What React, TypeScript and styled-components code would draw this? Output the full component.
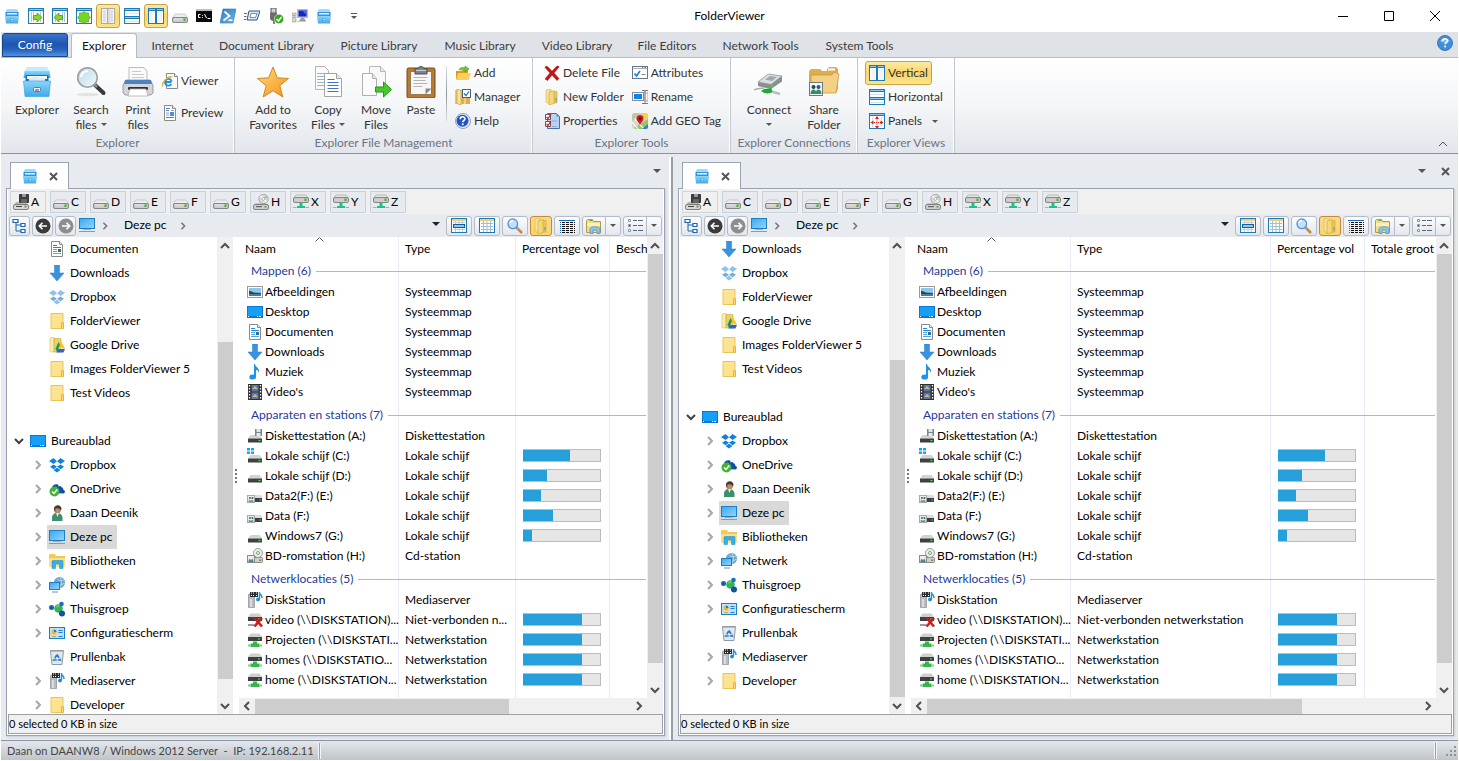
import React from 'react';
import styled, { createGlobalStyle, css } from 'styled-components';

const FONT = "'Lato', 'Liberation Sans', sans-serif";

const GlobalStyle = createGlobalStyle`
  *, *::before, *::after { box-sizing: border-box; }
  body { margin: 0; background: #fff; font-family: ${FONT}; font-size: 12px; line-height: 16px; color: #000; }
  button { font: inherit; color: inherit; background: none; border: 0; padding: 0; margin: 0; white-space: nowrap; }
  ul { list-style: none; margin: 0; padding: 0; }
`;

/* ------------------------------------------------------------------ icons */

const drivePlain = (
  <>
    <path d="M3.500 6h9c1 0 2 1.500 3 4H.5c1-2.500 2-4 3-4z" fill="#ededed" stroke="#b0b0b0" strokeWidth=".6" />
    <rect x=".5" y="9.500" width="15" height="5" rx="1.500" fill="#cdcdcd" stroke="#7c7c7c" strokeWidth=".9" />
    <path d="M2 11h8" stroke="#e9e9e9" />
    <rect x="11.500" y="10.500" width="2" height="2.500" fill="#3fae29" />
  </>
);

const darkBody = (
  <>
    <path d="M3.500 7h9L15 10.500H1z" fill="#d3d3d3" />
    <rect x="1" y="10.500" width="14" height="4" fill="#3d4144" />
    <rect x="11.500" y="12" width="2" height="1" fill="#5be04b" />
  </>
);

const serverBody = (
  <>
    <path d="M3.500 1.500h9L15 5H1z" fill="#cfcfcf" />
    <rect x="1" y="5" width="14" height="4" fill="#3d4144" />
    <rect x="11" y="6.500" width="2" height="1" fill="#5be04b" />
  </>
);

const twoPanes = (
  <>
    <rect x=".5" y=".5" width="15" height="15" fill="#fff" stroke="#1a7bb5" />
    <rect x="0" y="0" width="16" height="3" fill="#1a7bb5" />
    <rect x="1" y="1" width="14" height="1" fill="#8ecaf0" />
  </>
);

const sheet = (
  <>
    <path d="M2.500.5h8l3 3v12h-11z" fill="#fff" stroke="#8a8a8a" />
    <path d="M10.500.5v3h3" fill="#eee" stroke="#8a8a8a" />
  </>
);

const monitor = (
  <>
    <rect x="0" y="1" width="16" height="11" fill="#1c7fc4" />
    <rect x="1" y="2" width="14" height="9" fill="url(#screen)" />
    <rect x="4" y="12" width="8" height="1" fill="#8fb6d4" />
    <rect x="0" y="14" width="16" height="1" fill="#7f9db5" />
  </>
);

const cabinet = (
  <>
    <path d="M3 1h10l1.500 3H1.500z" fill="#9bdcfb" />
    <rect x="1.500" y="4" width="13" height="4" fill="#2f93dd" />
    <rect x="3" y="5" width="10" height="1.500" fill="#e9f6ff" />
    <path d="M1 8h14l-1 7.500H2z" fill="url(#cab)" />
    <rect x="6.500" y="11" width="3" height="1.500" fill="#f5f5f5" stroke="#3b7eb4" strokeWidth=".5" />
  </>
);

const dropboxShape = (a: string, b: string) => (
  <>
    <path d="M4.500 1L0 4l4.500 3L8 4.200zM11.500 1L16 4l-4.500 3L8 4.200z" fill={a} />
    <path d="M4.500 7.500L1 9.800l3.500 2.400L8 9.800zM11.500 7.500L15 9.800l-3.500 2.400L8 9.800z" fill={b} />
    <path d="M4.500 13L8 10.800l3.500 2.200L8 15.500z" fill={a} />
  </>
);

const iconArt: Record<string, React.ReactNode> = {
  cabinet,
  paneRight: (
    <>
      {twoPanes}
      <path d="M3.500 4v10M5.500 4v10M12.500 4v10" stroke="#a4cbe4" />
      <path d="M5.500 7.500H9V5l5 4.500L9 14v-2.500H5.500z" fill="#86d62c" stroke="#4d9416" strokeWidth=".8" />
    </>
  ),
  paneLeft: (
    <>
      {twoPanes}
      <path d="M3.500 4v10M10.500 4v10M12.500 4v10" stroke="#a4cbe4" />
      <path d="M10.500 7.500H7V5L2 9.500 7 14v-2.500h3.500z" fill="#86d62c" stroke="#4d9416" strokeWidth=".8" />
    </>
  ),
  paneStar: (
    <>
      {twoPanes}
      <path d="M8 3.500L10 5h2.500v2.500l2 2-2 2V14H10l-2 1.500L6 14H3.500v-2.500l-2-2 2-2V5H6z" fill="#76d624" stroke="#4ba01a" strokeWidth=".7" />
    </>
  ),
  paneGray: (
    <>
      <rect x="1" y="0" width="14" height="16" fill="#f6f6f6" />
      <path d="M1.500 0v16M7.500 0v16M14.500 0v16M1 .5h14M1 15.500h14" stroke="#a9a9a9" />
      <rect x="3" y="2" width="3" height="12" fill="#e0e0e0" />
      <rect x="10" y="2" width="3" height="12" fill="#e0e0e0" />
      <path d="M9 1v14" stroke="#c4c4c4" />
    </>
  ),
  paneH: (
    <>
      <rect x=".5" y=".5" width="15" height="15" fill="#fff" stroke="#1a7bb5" />
      <rect x="0" y="0" width="16" height="3" fill="#1a7bb5" />
      <rect x="0" y="8" width="16" height="3" fill="#1a7bb5" />
      <path d="M1 5.500h14M1 13.500h14" stroke="#d4e5f0" />
      <path d="M1 1.500h14M1 9.500h14" stroke="#8ecaf0" />
    </>
  ),
  paneV: (
    <>
      <rect x=".5" y=".5" width="7" height="15" fill="#fff" stroke="#1a7bb5" />
      <rect x="8.500" y=".5" width="7" height="15" fill="#fff" stroke="#1a7bb5" />
      <path d="M1 1.500h6M9 1.500h6" stroke="#8ecaf0" />
      <path d="M1 2.500h6M9 2.500h6" stroke="#1a7bb5" />
      <path d="M3 4v10M5 4v10M11 4v10M13 4v10" stroke="#dfeaf2" />
    </>
  ),
  drive: drivePlain,
  cmd: (
    <>
      <rect x="0" y="1" width="16" height="13" fill="#0a0a0a" />
      <rect x="0" y="1" width="16" height="2" fill="#bdbdbd" />
      <path d="M4.500 6.500H2.500v3h2M6.500 7v.8M6.500 9v.8M8.500 6l2 4M11.500 10.500h3" stroke="#fff" fill="none" />
    </>
  ),
  powershell: (
    <>
      <path d="M3 1h13l-3 14H0z" fill="url(#ps)" stroke="#2f6fa8" strokeWidth=".6" />
      <path d="M4.500 3.500L9.500 8l-6 4.500" stroke="#fff" strokeWidth="1.700" fill="none" />
      <path d="M8.500 12.200h4" stroke="#fff" strokeWidth="1.500" />
    </>
  ),
  run: (
    <>
      <path d="M5 3h11l-3 9H3z" fill="#dcebfa" stroke="#31507c" />
      <path d="M7 5.500h6l-1.500 4H6z" fill="#fff" stroke="#4a78b5" strokeWidth=".8" />
      <path d="M0 5.500h3M0 8.500h2.500M0 11.500h2" stroke="#666" />
    </>
  ),
  usb: (
    <>
      <path d="M3 0h5v5H3z" fill="#cfcfcf" stroke="#555" />
      <path d="M2 5h7v5c0 2-1.500 3-3.500 3S2 12 2 10z" fill="#6d6d6d" />
      <path d="M6 13v3" stroke="#555" strokeWidth="1.500" />
      <circle cx="11" cy="11" r="4.700" fill="#36a818" stroke="#fff" strokeWidth=".5" />
      <path d="M8.500 11l2 2 3-4" stroke="#fff" strokeWidth="1.500" fill="none" />
    </>
  ),
  netpc: (
    <>
      <rect x="5" y="1" width="11" height="9" fill="#b9bcc2" />
      <rect x="6.500" y="2.500" width="8" height="6" fill="#1626c9" />
      <path d="M10 2.500h4.500V7z" fill="#4d6bea" />
      <path d="M9 10h3l2 3H7z" fill="#9a9da3" />
      <rect x="0" y="5" width="4" height="9" fill="#d4d4d4" stroke="#999" strokeWidth=".6" />
      <path d="M1 7.500h2M1 9.500h2" stroke="#888" strokeWidth=".7" />
      <path d="M5 13.500h9" stroke="#c9c9c9" />
    </>
  ),
  ie: (
    <>
      <path d="M4.500.5h8l3 3v12h-11z" fill="#fafafa" stroke="#8a8a8a" />
      <path d="M12.500.5v3h3" fill="#eee" stroke="#8a8a8a" />
      <path d="M9.500 9H3.200M9.300 11a3.400 3.400 0 1 1 .4-2.500" stroke="#2494dd" strokeWidth="1.900" fill="none" />
      <path d="M.7 13.500C-.8 10 5.500 2.500 10.500 4" stroke="#e8b21a" strokeWidth="1.300" fill="none" />
    </>
  ),
  preview: (
    <>
      {sheet}
      <path d="M4 3.500h4M4 5.500h3M4 12.500h8" stroke="#5b7fb8" />
      <path d="M9 5.500h3M4 8h3M4 10h3" stroke="#8aa2c4" />
      <rect x="8" y="7" width="4" height="4" fill="#4c8fd6" />
    </>
  ),
  doc: (
    <>
      {sheet}
      <path d="M4 4.500h4M4 6.500h8" stroke="#1f8ad6" />
      <path d="M4 8.500h4M4 10.500h4M4 12.500h8" stroke="#5aa7dd" />
      <rect x="9" y="8" width="3" height="3" fill="#2d6d8d" />
    </>
  ),
  addFolder: (
    <>
      <path d="M1 6h5l1-1h6v9H1z" fill="#d99a1c" />
      <path d="M3 8h13l-2.500 7H1z" fill="#fbcf5b" />
      <path d="M4 5c1-3 4-3 6-2V1l4 3-4 3V5C8 4 6 4 4 5z" fill="#5fd02a" stroke="#2f8d12" strokeWidth=".5" />
    </>
  ),
  manager: (
    <>
      <path d="M0 1h7v14H0z" fill="#e9c86a" />
      <path d="M2 0l4 1.500V16l-4-1.500z" fill="#f9e39f" stroke="#b58d2c" strokeWidth=".6" />
      <path d="M7 9h8v6H7z" fill="#d9b04b" />
      <path d="M10 9v6" stroke="#f3dc95" strokeWidth="1.500" />
      <rect x="7.500" y=".5" width="8" height="8" fill="#fff" stroke="#4a5e78" />
      <path d="M9 4.500l2 2 3-4" stroke="#2368c4" strokeWidth="1.200" fill="none" />
    </>
  ),
  help: (
    <>
      <circle cx="8" cy="8" r="7.500" fill="#e6ecf5" stroke="#7d8ca6" strokeWidth=".8" />
      <circle cx="7.500" cy="7.800" r="6" fill="#1d55c4" />
      <path d="M5.200 6.200c0-3.200 4.800-3 4.800-.4 0 1.700-2.300 1.700-2.300 3.400" stroke="#fff" strokeWidth="1.600" fill="none" />
      <circle cx="7.700" cy="11.300" r="1" fill="#fff" />
    </>
  ),
  helpLight: (
    <>
      <circle cx="8" cy="8" r="7.500" fill="#3f8fd8" stroke="#2a68ac" strokeWidth=".8" />
      <path d="M3 6a5.500 4 0 0 1 10 0c-3 2-7 2-10 0z" fill="#7dbcf0" />
      <path d="M5.500 6.200c0-3.200 5-3 5-.4 0 1.700-2.400 1.700-2.400 3.400" stroke="#fff" strokeWidth="1.600" fill="none" />
      <circle cx="8.100" cy="11.500" r="1" fill="#fff" />
    </>
  ),
  delete: (
    <path d="M1 2.500C1.500 1 3 1 4 2l4 4.200L12.500 1.500c1-1 2.500-.5 2.500.5L10 8l5 5.500-2 2L8 10l-4.500 5.500L1 14l5-6z" fill="#c81410" stroke="#8f0d0a" strokeWidth=".5" />
  ),
  folderOpen: (
    <>
      <path d="M2 1l5-1v15l-5-1.500z" fill="#f8e39a" stroke="#d6b44c" strokeWidth=".6" />
      <path d="M7 2.500h6V14H7z" fill="#e8c85c" stroke="#caa53c" strokeWidth=".6" />
      <path d="M5 3l5-1.500V14.500L5 16z" fill="#f4d87a" stroke="#c9a43c" strokeWidth=".6" />
      <rect x="11.500" y="9" width="1" height="3.500" fill="#4b98d6" />
    </>
  ),
  properties: (
    <>
      <path d="M3.500.5h9l3 3v12h-12z" fill="#b8d3f3" stroke="#4a6ea5" />
      <path d="M12.500.5v3h3" fill="#5b86c4" />
      <path d="M8 8h5M8 13.500h5" stroke="#8aabd8" />
      <path d="M1.500 1.500h5v5h-5zM1.500 8.500h5v5h-5z" fill="#fff" stroke="#5b5b5b" />
      <path d="M2.500 4l1.500 1.500L7 1M2.500 11l1.500 1.500L7 8" stroke="#d01a1a" strokeWidth="1.200" fill="none" />
    </>
  ),
  attributes: (
    <>
      <rect x=".5" y="1.500" width="15" height="12" fill="#fff" stroke="#6a7684" />
      <path d="M1 3.500h14" stroke="#aab3bd" />
      <path d="M10 2.500h1M12.500 2.500h1.500" stroke="#5c6773" />
      <path d="M2.500 8.500l2 2.500 3.500-5" stroke="#1c87d4" strokeWidth="1.700" fill="none" />
      <path d="M9.500 9.500h4" stroke="#7c8794" />
    </>
  ),
  rename: (
    <>
      <rect x=".5" y="3.500" width="11" height="8" fill="#fff" stroke="#8a8a8a" />
      <rect x="2" y="5" width="8" height="5" fill="#0a84ee" />
      <path d="M10 1.500h2c1 0 1 1 1 1s0-1 1-1h2M13 2v11M10 14.500h2c1 0 1-1 1-1s0 1 1 1h2" stroke="#777" strokeWidth="1.200" fill="none" />
      <path d="M14 4h2v8h-2" fill="#fff" stroke="#8a8a8a" strokeWidth=".8" />
    </>
  ),
  geo: (
    <>
      <rect x="0" y="0" width="16" height="16" rx="3" fill="#d8d5cb" />
      <path d="M8 0h5c2 0 3 1 3 3v6z" fill="#f5d043" />
      <path d="M0 3c0-2 1-3 3-3h5L0 8z" fill="#b9c9a4" />
      <path d="M2 15L16 6v7c0 2-1 3-3 3H4z" fill="#8fc76a" />
      <path d="M10 16l6-5v3c0 1-1 2-2 2z" fill="#3d7de0" />
      <path d="M0 9l6 7M3 6l8 9" stroke="#f7f5ee" strokeWidth="1.200" />
      <path d="M8 12.500C7.500 9.500 4.500 8.500 4.500 5.500a3.500 3.500 0 0 1 7 0c0 3-3 4-3.500 7z" fill="#d01a1a" />
      <circle cx="8" cy="5.500" r="1.300" fill="#5c0909" />
    </>
  ),
  panels: (
    <>
      {twoPanes}
      <path d="M3.500 4v10M12.500 4v10" stroke="#cfe1ee" />
      <path d="M8 4.500v10M3 9.500h10" stroke="#d81c1c" strokeDasharray="1 1" />
      <path d="M8 3l2 3H6zM8 16l2-3H6zM1.500 9.500l3-2v4zM14.500 9.500l-3-2v4z" fill="#d81c1c" />
    </>
  ),
  driveFloppy: (
    <>
      <path d="M3 8h10l2 3v3H1v-3z" fill="#b9b9b9" />
      <rect x=".5" y="10.500" width="15" height="5" rx="1.500" fill="#d8d8d8" stroke="#666" strokeWidth=".8" />
      <path d="M3 12.500h6" stroke="#444" />
      <rect x="11.500" y="11.500" width="2" height="2" fill="#4aa830" />
      <rect x="6" y="0" width="10" height="9" rx="1" fill="#3b3b3b" />
      <rect x="9" y="0" width="4" height="3" fill="#9a9a9a" />
      <rect x="8" y="5" width="6" height="4" fill="#666" />
    </>
  ),
  driveCd: (
    <>
      <path d="M3 9h10l2 2v3H1v-3z" fill="#c6c6c6" />
      <rect x=".5" y="10.500" width="15" height="5" rx="1.500" fill="#cfcfcf" stroke="#6f6f6f" strokeWidth=".8" />
      <path d="M3 12.700h6" stroke="#555" />
      <rect x="11.500" y="12" width="2" height="1.500" fill="#4aa830" />
      <circle cx="10.500" cy="5" r="4.700" fill="#dcdcdc" stroke="#8c8c8c" strokeWidth=".7" />
      <path d="M10.500 5L7.500 2M10.500 5l3 3" stroke="#fff" strokeWidth="1.400" />
      <path d="M10.500 5l3-2.500" stroke="#7bbf5a" strokeWidth="1.200" />
      <circle cx="10.500" cy="5" r="1.400" fill="#fff" stroke="#888" strokeWidth=".6" />
    </>
  ),
  driveNet: (
    <>
      <path d="M3 1h10l2.500 3.500h-15z" fill="#e4e4e4" stroke="#9b9b9b" strokeWidth=".6" />
      <rect x=".5" y="3.500" width="15" height="5" rx="1.500" fill="#cdcdcd" stroke="#7c7c7c" strokeWidth=".9" />
      <rect x="11.500" y="4.500" width="2" height="2.500" fill="#3fae29" />
      <path d="M6.500 9h3v3h2.500v2H4v-2h2.500z" fill="#17c486" />
      <path d="M0 13.500h3.500M12.500 13.500H16" stroke="#a5adab" />
    </>
  ),
  treeView: (
    <>
      <path d="M1 1.500h5v3H1zM9 5.500h4v3H9zM9 11.500h4v3H9z" fill="#fff" stroke="#1b66b0" strokeWidth="1.200" />
      <path d="M4 5v8h5M4 7h5" stroke="#1b66b0" fill="none" />
    </>
  ),
  back: (
    <>
      <circle cx="8" cy="8" r="7.500" fill="#3a3a3a" />
      <path d="M12 8H4.500M7.500 4.800L4.300 8l3.200 3.200" stroke="#fff" strokeWidth="1.600" fill="none" />
    </>
  ),
  forward: (
    <>
      <circle cx="8" cy="8" r="7.500" fill="#8e8e8e" />
      <path d="M4 8h7.500M8.500 4.800L11.700 8l-3.200 3.200" stroke="#fff" strokeWidth="1.600" fill="none" />
    </>
  ),
  pc: monitor,
  tableSel: (
    <>
      <rect x=".5" y=".5" width="15" height="14" fill="#fff" stroke="#1a7bb5" />
      <rect x="1" y="1" width="14" height="2" fill="#f4cd7c" />
      <path d="M2 4.500h12M2 11.500h12M4.500 3v11M8 3v11M11.500 3v11" stroke="#bcd0de" />
      <rect x="2.500" y="6.500" width="11" height="3" fill="#8ec8ee" stroke="#155e96" />
    </>
  ),
  table: (
    <>
      <rect x=".5" y=".5" width="15" height="14" fill="#fff" stroke="#1a7bb5" />
      <rect x="1" y="1" width="14" height="2" fill="#f4cd7c" />
      <path d="M2 5.500h12M2 8.500h12M2 11.500h12M4.500 3v11M8 3v11M11.500 3v11" stroke="#a3bccf" />
    </>
  ),
  magnify: (
    <>
      <path d="M9 9l6 6" stroke="#c98a3a" strokeWidth="2.600" />
      <path d="M8.500 8.500l3 3" stroke="#8aa4c4" strokeWidth="2" />
      <circle cx="5.800" cy="5.800" r="4.800" fill="#bfe0fb" stroke="#5e8fd0" strokeWidth="1.300" />
      <path d="M3 5a3 3 0 0 1 3-2.500" stroke="#fff" strokeWidth="1.300" fill="none" />
    </>
  ),
  details: (
    <>
      <path d="M0 2.500h16" stroke="#1b66b0" />
      <path d="M1.500 4v12" stroke="#1b66b0" strokeDasharray="1 1" />
      <path d="M3 4.500h13M3 6.500h13M3 8.500h13M3 10.500h13M3 12.500h13M3 14.500h13" stroke="#111" strokeDasharray="3 1" />
    </>
  ),
  libs: (
    <>
      <path d="M0 2l1-1h5l1 2h9v11H0z" fill="#f3c858" />
      <path d="M0 5h16v9H0z" fill="#fbe08b" />
      <path d="M3 15.500V8.500c0-1 .5-1 1-1h9c.5 0 1 0 1 1v7h-3.500V11h-4v4.500z" fill="#35b0ea" stroke="#1b87c4" strokeWidth=".5" />
    </>
  ),
  libView: (
    <>
      <path d="M.5 2.500l1-1h5l1 2h7v11H.5z" fill="#f3dd8a" stroke="#b59a48" />
      <path d="M1 5h13v3H1z" fill="#fbf0c0" />
      <path d="M3.500 2.500h3" stroke="#3fae4a" />
      <path d="M4 15.500V11c0-3 10-3 10 0v4.500h-3V12H7v3.500z" fill="#8dc8ee" stroke="#3b8bc4" strokeWidth=".7" />
    </>
  ),
  listView: (
    <>
      <path d="M1.500 1.500h2v2h-2zM1.500 6.500h2v2h-2zM1.500 11.500h2v2h-2z" fill="#fff" stroke="#8b93a8" />
      <rect x="2" y="7" width="1" height="1" fill="#c81a1a" />
      <path d="M6 2.500h4M11 2.500h5M6 7.500h4M11 7.500h5M6 12.500h4M11 12.500h5" stroke="#5a657c" />
    </>
  ),
  download: <path d="M5.500 0h5v8H15l-7 8-7-8h4.500z" fill="#3793e0" stroke="#2479c4" strokeWidth=".5" />,
  dropboxLight: dropboxShape('#8fc1ec', '#74aee0'),
  dropbox: dropboxShape('#1081de', '#1081de'),
  folder: (
    <>
      <path d="M2 .5h12v15H2z" fill="#fde28f" stroke="#e9c65c" />
      <path d="M12.500 9.500h2v6h-2z" fill="#fbd868" stroke="#dfb648" />
    </>
  ),
  gdrive: (
    <>
      <path d="M1 1l4-1v15H1z" fill="#fbeeb5" stroke="#d9bd62" strokeWidth=".6" />
      <path d="M5 1.500h7V15H5z" fill="#ecd06c" stroke="#cba63e" strokeWidth=".6" />
      <path d="M9.500 5h3l3.500 6.500h-3z" fill="#fcc419" />
      <path d="M9.500 5L11 8l-3 7-1.500-3.500z" fill="#1a9a58" />
      <path d="M9 12h7l-1.500 3.500H7.500z" fill="#2c63d6" />
    </>
  ),
  desktop: (
    <>
      <rect x="0" y="2" width="16" height="12" fill="#0a78d1" />
      <rect x="1" y="3" width="14" height="9" fill="#14a0f8" />
      <path d="M1 12.500h1M10 12.500h1M12 12.500h2" stroke="#fff" />
    </>
  ),
  onedrive: (
    <>
      <path d="M4 12c-3 0-4-4-1-5 0-4 6-5 7.500-2 3-.5 4 2 3.500 3.500 2 .5 2.500 3 1 4z" fill="#0f4fa8" />
      <path d="M9 5c2-1 4 0 4.500 2" stroke="#fff" strokeWidth=".8" fill="none" />
      <circle cx="5.500" cy="10.500" r="5" fill="#42b532" />
      <path d="M3 10.500l2 2 3.300-4" stroke="#fff" strokeWidth="1.500" fill="none" />
    </>
  ),
  user: (
    <>
      <path d="M3 16v-3c0-3.500 2-5 5-5s5.500 1.500 5.500 5v3z" fill="#3e8f6d" />
      <path d="M7 8h3l-1.500 4z" fill="#f2f2f2" />
      <circle cx="8.500" cy="4.800" r="3.500" fill="#b98a68" />
      <path d="M5 4c0-5 7.500-5 7.500 0l-.7 1.500C11 3 8 3 6.500 3.500L6 7z" fill="#4c3427" />
    </>
  ),
  network: (
    <>
      <circle cx="10.500" cy="5.500" r="5.500" fill="#6aa7cf" />
      <path d="M8 2c2 2 5 2 7 1M7 7c3 1 6 1 8.500-1M11 .5c2 3 2 7 0 10" stroke="#bfe0f5" strokeWidth=".8" fill="none" />
      <rect x="0" y="5" width="11" height="8" fill="#1c7fc4" />
      <rect x="1" y="6" width="9" height="6" fill="url(#screen)" />
      <path d="M3 15h6" stroke="#7fa6c4" strokeWidth="1.200" />
    </>
  ),
  homegroup: (
    <>
      <circle cx="2.500" cy="6.500" r="2.500" fill="#1860b0" />
      <circle cx="9.500" cy="7.500" r="4.300" fill="#33b35a" />
      <circle cx="12.500" cy="3" r="2.300" fill="#1f6fb8" />
      <circle cx="13" cy="12.500" r="3" fill="#1650a0" />
      <path d="M7.500 6a2.500 2.500 0 0 1 3-1" stroke="#a3e6b4" fill="none" />
    </>
  ),
  control: (
    <>
      <rect x="0" y="2" width="16" height="12" fill="#1c7fc8" />
      <rect x="1" y="3" width="14" height="10" fill="#bfe2f7" />
      <circle cx="5" cy="7" r="2.500" fill="#f0b22e" />
      <path d="M5 7V4.500A2.500 2.500 0 0 1 7.500 7z" fill="#1c7fd0" />
      <path d="M9.500 5.500h4M9.500 7.500h4M9.500 11.500h4" stroke="#1c7fd0" strokeWidth="1.200" />
      <path d="M3 11.500h4" stroke="#f0a22e" strokeWidth="1.200" />
    </>
  ),
  bin: (
    <>
      <path d="M1.500 1.500h13l-1.500 14H3z" fill="#e2e8ec" stroke="#8f9aa3" />
      <path d="M2 2.500h12" stroke="#b4bec6" />
      <path d="M8 5.500l3.300 5.500H4.700z" fill="none" stroke="#2a7fd4" strokeWidth="1.700" strokeDasharray="4 1" />
    </>
  ),
  media: (
    <>
      <rect x="1.500" y="2" width="6" height="14" rx="1" fill="#b9bcc0" stroke="#7b7e82" strokeWidth=".6" />
      <path d="M4 7v8" stroke="#e6e6e6" strokeWidth="1.500" />
      <rect x="3" y="0" width="8" height="5" fill="#2b2b2b" />
      <path d="M4 1h1M4 3.500h1M6 1h1M6 3.500h1M9 1h1M9 3.500h1" stroke="#fff" />
      <path d="M12.500 0v7M12.500 1c1 2 2.500 2 2.500 5" stroke="#1c8fe0" strokeWidth="1.400" fill="none" />
      <circle cx="11" cy="7.500" r="1.900" fill="#1c8fe0" />
    </>
  ),
  pictures: (
    <>
      <rect x=".5" y="2.500" width="15" height="11" fill="#fff" stroke="#9a9a9a" />
      <rect x="2" y="4" width="12" height="8" fill="#8fc8ee" />
      <path d="M2 6.500l5 2 7 .5v1H2z" fill="#2b4b4a" />
      <path d="M2 10h12v2H2z" fill="#3b7fae" />
    </>
  ),
  music: (
    <>
      <path d="M8 0c.5 3.500 5 3.500 4 9-.5-2.500-2-3-3-3v6.500H7V0z" fill="#1b95ea" />
      <ellipse cx="5.700" cy="13" rx="3.400" ry="2.600" fill="#1b95ea" />
    </>
  ),
  video: (
    <>
      <rect x="1" y="0" width="14" height="16" fill="#2f2f2f" />
      <path d="M2.500 1v15M13.500 1v15" stroke="#fff" strokeWidth="1.300" strokeDasharray="1.500 1.500" />
      <rect x="4.500" y="1" width="7" height="6.500" fill="#4c78c8" />
      <rect x="4.500" y="8.500" width="7" height="6.500" fill="#4c78c8" />
      <path d="M5 5l3-3 3 3zM5 13l3-3 3 3z" fill="#e6b23a" />
    </>
  ),
  darkFloppy: (
    <>
      {darkBody}
      <rect x="8" y="1" width="7" height="7" fill="#7b858e" />
      <rect x="9.500" y="1" width="4" height="3" fill="#dfe5ea" />
      <rect x="9.500" y="5" width="4" height="3" fill="#e9e9e9" />
    </>
  ),
  darkDrive: darkBody,
  winDrive: (
    <>
      {darkBody}
      <path d="M0 0h3v2.500H0zM4 0h3v2.500H4zM0 3.500h3V6H0zM4 3.500h3V6H4z" fill="#14a7ee" />
    </>
  ),
  shareDrive: (
    <>
      <path d="M8 7h6l1.500 3H7z" fill="#dcdcdc" />
      <rect x="8" y="10" width="7" height="4" fill="#3d4144" />
      <rect x="12.500" y="11.500" width="1.500" height="1" fill="#5be04b" />
      <rect x=".5" y="7.500" width="7" height="7" fill="#ececec" stroke="#a9a9a9" />
      <circle cx="3" cy="10" r="1.100" fill="#5f6b7c" />
      <circle cx="5.500" cy="10" r="1.100" fill="#3a6d5a" />
      <path d="M1.500 14c0-3 2.500-3 2.500 0M4 14c0-3 2.500-3 2.500 0" fill="#6a93a6" />
    </>
  ),
  cdShare: (
    <>
      <rect x="6" y="9.500" width="9.500" height="5" rx="1" fill="#cfcfcf" stroke="#777" strokeWidth=".8" />
      <circle cx="11" cy="5" r="4.500" fill="#ececec" stroke="#8c8c8c" strokeWidth=".8" />
      <circle cx="11" cy="5" r="1.500" fill="#fff" stroke="#6dab5a" />
      <rect x=".5" y="7.500" width="7" height="7" fill="#ececec" stroke="#8c8c8c" />
      <path d="M1.500 14c0-4 2.500-4 2.500 0M4 14c0-4 2.500-4 2.500 0" fill="#4a7a90" />
      <rect x="12" y="11.500" width="2" height="1.500" fill="#4aa830" />
    </>
  ),
  netDrive: (
    <>
      {serverBody}
      <path d="M6 9.500h4v2h2.500V15h-9v-3.500H6z" fill="#35b54a" />
      <path d="M1 13.500h2.500M12.500 13.500H15" stroke="#7ccf88" strokeWidth="2" />
    </>
  ),
  netDriveX: (
    <>
      {serverBody}
      <path d="M1 13h6" stroke="#9a9a9a" strokeWidth="2" />
      <path d="M7.500 6l7.500 8.500M15 6l-7.500 8.500" stroke="#d8161a" strokeWidth="2.600" />
    </>
  ),
};

const bigArt: Record<string, React.ReactNode> = {
  cabinet: (
    <>
      <path d="M6 1h20l2.500 4h-25z" fill="#c5ecfd" />
      <path d="M3.500 5h25l1 7h-27z" fill="url(#cab)" />
      <rect x="4.500" y="9" width="23" height="8" fill="#1c6fb8" />
      <path d="M6 10h20v3H6z" fill="#f4fbff" />
      <path d="M8 12h3l1-1h4l1 1h7v3H8z" fill="#e1e9ef" />
      <path d="M2.500 15h27L28 30.500H4z" fill="url(#cab)" stroke="#3b9adb" strokeWidth=".6" />
      <rect x="12.500" y="21.500" width="7" height="4" rx="1" fill="#f2f2f2" stroke="#4d7fa6" />
      <path d="M14 24h4" stroke="#3b4e5e" />
    </>
  ),
  search: (
    <>
      <ellipse cx="13" cy="28.500" rx="11" ry="1.800" fill="#e3e3e3" />
      <path d="M19 18l9.500 9" stroke="#3a3a3a" strokeWidth="4" strokeLinecap="round" />
      <path d="M18 17l4 4" stroke="#8a8a8a" strokeWidth="2.600" />
      <circle cx="12.500" cy="11.500" r="9.800" fill="url(#lens)" stroke="#9a9fa4" strokeWidth="1.600" />
      <path d="M6 11a7 7 0 0 1 7-6" stroke="#fff" strokeWidth="2.200" fill="none" />
    </>
  ),
  print: (
    <>
      <path d="M7 1.500h15l3 4V15H7z" fill="#fafafa" stroke="#bdbdbd" />
      <path d="M10 5.500h9M10 8.500h12M10 11.500h12" stroke="#c9c9c9" />
      <path d="M4 14h24l3 5v8l-2 2H3l-2-2v-8z" fill="#d3d5d8" stroke="#8b8e92" strokeWidth=".8" />
      <path d="M3 14h26l1 4H2z" fill="#4f82c2" />
      <rect x="6" y="21" width="20" height="3" rx="1" fill="#2f3236" />
      <path d="M8 23h16l2 7H6z" fill="#fff" stroke="#b0b0b0" strokeWidth=".8" />
    </>
  ),
  star: <path d="M16 1l4.300 10.800L31.500 12.500l-8.700 7.200 3 11.300L16 24.700 6.200 31l3-11.300L.5 12.500l11.200-.7z" fill="url(#star)" stroke="#cf8a1c" strokeLinejoin="round" />,
  copy: (
    <>
      <path d="M3.500.5h9l4 4v19h-13z" fill="#fbfbfb" stroke="#b4b4b4" />
      <path d="M5 7.500h8M5 10.500h8M5 13.500h8M5 16.500h8M5 19.500h8" stroke="#93b4da" />
      <path d="M12.500 7.500h12l5 5v18h-17z" fill="#fdfdfd" stroke="#a4a4a4" />
      <path d="M24.500 7.500v5h5" fill="#e6e6e6" stroke="#a4a4a4" />
      <path d="M15.500 13.500h7M15.500 16.500h11M15.500 19.500h11M15.500 22.500h11M15.500 25.500h11" stroke="#3a76c4" />
    </>
  ),
  move: (
    <>
      <path d="M9.500.5h11l5 5v19h-16z" fill="#f8f8f8" stroke="#b8b8b8" />
      <path d="M20.500.5v5h5" fill="#e8e8e8" stroke="#b8b8b8" />
      <path d="M2.500 7.500h10l4 5v17h-14z" fill="#fcfcfc" stroke="#b0b0b0" />
      <path d="M12.500 7.500v5h4" fill="#e8e8e8" stroke="#b0b0b0" />
      <path d="M15.500 21h8v-5l8 7.500-8 7.500v-5h-8z" fill="#45c832" stroke="#2a9418" />
    </>
  ),
  paste: (
    <>
      <rect x="2" y="2" width="28" height="30" rx="1.500" fill="#b57a34" stroke="#7a4a14" />
      <path d="M5.500 5.500h21v23h-21z" fill="#f7f7f7" stroke="#8d6a38" strokeWidth=".8" />
      <path d="M8.500 11.500h14M8.500 14.500h12M8.500 17.500h14M8.500 20.500h9" stroke="#b5b5b5" />
      <path d="M20.500 28.500v-6h6z" fill="#8a8a8a" />
      <path d="M10 2.500h3C13 0 19 0 19 2.500h3V8H10z" fill="#7f8386" stroke="#4d5052" />
      <path d="M11 4.500h10" stroke="#c9ccce" />
    </>
  ),
  connect: (
    <>
      <path d="M5 16L15 8l14 2v5.500L18 23 5 20z" fill="#8b8f93" />
      <path d="M5 16L15 8l14 2L18 18.500z" fill="#dcdfe2" stroke="#8a8d90" strokeWidth=".6" />
      <path d="M12 13.500l5-3.500 7 1-5 4z" fill="#a4a8ac" />
      <circle cx="19" cy="19.500" r="1.200" fill="#3cdc2a" />
      <path d="M1 24c3-2 6-1 10-2" stroke="#a9adb0" strokeWidth="1.500" fill="none" />
      <path d="M8 25c3-3 7-2 10-3l2 4c-4 2-8 2-12-1z" fill="#1fa83a" />
      <path d="M20 26l7 2" stroke="#b9bdc0" strokeWidth="2.500" />
    </>
  ),
  share: (
    <>
      <path d="M1 5l2-2h9l2 2h5V3l2-2h7l2 2v20l-2 4H3l-2-2z" fill="#dcae50" />
      <path d="M3 9h21l2-3 5 2-3 19H3z" fill="#f4cf84" stroke="#c79a42" strokeWidth=".8" />
      <path d="M20 2.500h7v2h-7z" fill="#fff" />
      <rect x="1.500" y="16.500" width="13" height="13" fill="#f3f5f6" stroke="#6f767c" />
      <circle cx="5.500" cy="21" r="2" fill="#2f4a44" />
      <circle cx="10.500" cy="21" r="2" fill="#2f5a7c" />
      <path d="M2.500 28c0-6 6-6 6 0zM7.500 28c0-6 6-6 6 0z" fill="#2f8f6a" />
    </>
  ),
};

const Svg = styled.svg`
  display: block;
  flex: none;
`;

const Icon = ({ name, size = 16 }: { name: string; size?: number }) => (
  <Svg width={size} height={size} viewBox="0 0 16 16" aria-hidden="true">
    {iconArt[name]}
  </Svg>
);

const BigIcon = ({ name }: { name: string }) => (
  <Svg width="32" height="32" viewBox="0 0 32 32" aria-hidden="true">
    {bigArt[name]}
  </Svg>
);

const PaintHolder = styled.svg`
  position: absolute;
`;

const SharedPaints = () => (
  <PaintHolder width="0" height="0" aria-hidden="true">
    <defs>
      <linearGradient id="screen" x1="0" y1="0" x2="1" y2="1">
        <stop offset="0" stopColor="#3fa9f5" />
        <stop offset="1" stopColor="#8fd4fb" />
      </linearGradient>
      <linearGradient id="cab" x1="0" y1="0" x2="0" y2="1">
        <stop offset="0" stopColor="#8ad6fb" />
        <stop offset="1" stopColor="#3fa9ea" />
      </linearGradient>
      <linearGradient id="ps" x1="0" y1="0" x2="1" y2="1">
        <stop offset="0" stopColor="#2f7fc4" />
        <stop offset="1" stopColor="#6db6ea" />
      </linearGradient>
      <linearGradient id="lens" x1="0" y1="0" x2="1" y2="1">
        <stop offset="0" stopColor="#b9d9e8" />
        <stop offset="1" stopColor="#f2fafd" />
      </linearGradient>
      <linearGradient id="star" x1="0" y1="0" x2="1" y2="1">
        <stop offset="0" stopColor="#ffdf7a" />
        <stop offset="1" stopColor="#f58f1c" />
      </linearGradient>
    </defs>
  </PaintHolder>
);

const Down = ({ color = '#555', size = 8 }: { color?: string; size?: number }) => (
  <Svg width={size} height={size / 2} viewBox="0 0 8 4" aria-hidden="true">
    <path d="M0 0h8L4 4z" fill={color} />
  </Svg>
);

const chevrons = {
  up: 'M1 7l4-4 4 4',
  down: 'M1 3l4 4 4-4',
  left: 'M7 1L3 5l4 4',
  right: 'M3 1l4 4-4 4',
};

const Chevron = ({ dir, color = '#505050', weight = 2, size = 10 }: { dir: keyof typeof chevrons; color?: string; weight?: number; size?: number }) => (
  <Svg width={size} height={size} viewBox="0 0 10 10" aria-hidden="true">
    <path d={chevrons[dir]} stroke={color} strokeWidth={weight} fill="none" />
  </Svg>
);

const Cross = () => (
  <Svg width="9" height="9" viewBox="0 0 9 9" aria-hidden="true">
    <path d="M1 1l7 7M8 1L1 8" stroke="#555" strokeWidth="2" />
  </Svg>
);

/* ----------------------------------------------------------- window frame */

const Window = styled.div`
  display: flex;
  flex-direction: column;
  height: 100vh;
  min-height: 480px;
  padding: 0 1px 1px;
  overflow: hidden;
`;

const TitleBar = styled.header`
  display: grid;
  grid-template-columns: 1fr auto 1fr;
  align-items: center;
  height: 32px;
  flex: none;
`;

const QuickBar = styled.div`
  display: flex;
  align-items: center;
  margin-left: -1px;
`;

const pressed = css`
  background: linear-gradient(#fde9a6, #fbd566 50%, #fde48a);
  border: 1px solid #c8a24a;
  border-radius: 3px;
`;

const QuickButton = styled.button<{ $on?: boolean }>`
  display: grid;
  place-items: center;
  width: 24px;
  height: 24px;
  ${(p) => p.$on && pressed}
`;

const QuickMore = styled.button`
  display: grid;
  justify-items: center;
  gap: 2px;
  margin-left: 12px;
  width: 12px;
  &::before { content: ''; width: 6px; height: 1px; background: #555; }
`;

const WindowTitle = styled.h1`
  margin: 0;
  font-size: 12px;
  font-weight: 400;
`;

const WindowButtons = styled.div`
  display: flex;
  justify-content: flex-end;
`;

const WindowButton = styled.button`
  display: grid;
  place-items: center;
  width: 46px;
  height: 30px;
`;

const TabStrip = styled.nav`
  display: flex;
  align-items: flex-end;
  height: 25px;
  flex: none;
  padding-left: 1px;
  background: #dfe3e8;
`;

const ConfigTab = styled.button`
  width: 66px;
  height: 24px;
  margin-right: 3px;
  color: #fff;
  background: linear-gradient(#3a74c8, #1f55b0 45%, #2460bc 70%, #4f92e0);
  border: 1px solid #1b4689;
  border-radius: 3px 3px 0 0;
`;

const RibbonTab = styled.button<{ $w: number; $active?: boolean }>`
  width: ${(p) => p.$w}px;
  height: 24px;
  padding-top: 2px;
  color: #3b3b3b;
  ${(p) =>
    p.$active &&
    css`
      position: relative;
      z-index: 1;
      height: 25px;
      margin: 0 2px -1px 0;
      padding-top: 0;
      color: #111;
      background: #fff;
      border: 1px solid #b5bcc6;
      border-bottom: 0;
      border-radius: 3px 3px 0 0;
    `}
`;

const TabHelp = styled.button`
  margin: 0 5px 6px auto;
`;

/* ----------------------------------------------------------------- ribbon */

const Ribbon = styled.section`
  display: flex;
  height: 97px;
  flex: none;
  background: linear-gradient(#ffffff, #f4f6f8 50%, #e2e6ec);
  border-top: 1px solid #b5bcc6;
  border-bottom: 1px solid #8b93a0;
`;

const Group = styled.div<{ $w: number }>`
  display: flex;
  flex-direction: column;
  width: ${(p) => p.$w}px;
  border-right: 1px solid #c3c8d0;
  box-shadow: inset -1px 0 #fff;
`;

const GroupBody = styled.div<{ $pad: number }>`
  display: flex;
  height: 77px;
  padding-left: ${(p) => p.$pad}px;
`;

const GroupTitle = styled.div`
  text-align: center;
  color: #6b7482;
`;

const BigButton = styled.button<{ $w: number }>`
  display: flex;
  flex-direction: column;
  align-items: center;
  width: ${(p) => p.$w}px;
  padding-top: 8px;
  line-height: 15px;
  color: #333;
  white-space: normal;
  & > svg { margin-bottom: 4px; }
`;

const LabelLine = styled.span`
  display: flex;
  align-items: center;
  gap: 4px;
  min-height: 15px;
  white-space: nowrap;
`;

const Stack = styled.div<{ $wide?: boolean }>`
  display: flex;
  flex-direction: column;
  gap: ${(p) => (p.$wide ? 8 : 0)}px;
  padding-top: ${(p) => (p.$wide ? 11 : 3)}px;
`;

const SmallButton = styled.button<{ $on?: boolean; $w?: number }>`
  display: flex;
  align-items: center;
  align-self: flex-start;
  gap: 3px;
  height: 24px;
  min-width: ${(p) => (p.$w ? `${p.$w}px` : 'auto')};
  padding: 0 3px;
  color: #333;
  border: 1px solid transparent;
  ${(p) => p.$on && pressed}
  & > svg:last-child:not(:first-child) { margin-left: 7px; }
`;

const Separator = styled.span`
  width: 1px;
  height: 56px;
  margin: 8px 4px 0 1px;
  background: linear-gradient(#dfe2e6, #8d939c, #dfe2e6);
`;

const Collapse = styled.button`
  margin: auto 10px 4px auto;
`;

/* ------------------------------------------------------------------ panes */

const Workspace = styled.main`
  display: grid;
  grid-template-columns: minmax(0, 668fr) 4px minmax(0, 785fr);
  grid-template-rows: minmax(0, 1fr);
  flex: 1;
  min-height: 0;
  background: #e7ebf0;
`;

const Pane = styled.section`
  display: flex;
  flex-direction: column;
  min-width: 0;
  padding: 8px 4px 4px 5px;
`;

const PaneSplitter = styled.div`
  margin-top: 3px;
  background: linear-gradient(to right, #fff 50%, #9a9da1 50%);
`;

const PaneTabs = styled.div`
  display: flex;
  align-items: flex-start;
  height: 26px;
  flex: none;
  padding-left: 4px;
`;

const PaneTab = styled.div`
  display: flex;
  align-items: center;
  gap: 11px;
  width: 59px;
  height: 27px;
  padding-left: 11px;
  position: relative;
  z-index: 1;
  background: #fff;
  border: 1px solid #9aa3b1;
  border-bottom: 0;
`;

const PaneTools = styled.div`
  display: flex;
  align-items: center;
  gap: 15px;
  height: 18px;
  margin: 0 4px 0 auto;
`;

const PaneFrame = styled.div`
  display: flex;
  flex-direction: column;
  flex: 1;
  min-height: 0;
  padding: 0 1px 1px;
  background: #fff;
  border: 1px solid #9aa3b1;
  box-shadow: 1px 1px 2px #c6ccd4;
`;

const DriveBar = styled.div`
  display: flex;
  gap: 4px;
  height: 25px;
  flex: none;
  padding: 2px;
  background: #f0f0f0;
`;

const DriveButton = styled.button<{ $current?: boolean }>`
  display: flex;
  align-items: center;
  gap: 2px;
  width: 36px;
  height: 22px;
  padding-left: 2px;
  background: ${(p) => (p.$current ? '#f0f0f0' : '#e7ebf0')};
  border: 1px solid ${(p) => (p.$current ? '#d4d4d4' : '#c5d2de')};
`;

const NavBar = styled.div`
  display: flex;
  align-items: center;
  gap: 2px;
  height: 23px;
  flex: none;
  padding: 0 1px;
  background: #e7ebf0;
`;

const ToolButton = styled.button<{ $w?: number; $on?: boolean }>`
  display: grid;
  place-items: center;
  width: ${(p) => p.$w ?? 26}px;
  height: 20px;
  background: linear-gradient(#fbfcfd, #e3e7ec);
  border: 1px solid #b4bcc8;
  border-radius: 3px;
  ${(p) =>
    p.$on &&
    css`
      background: linear-gradient(#fdd98a, #fbd566);
      border-color: #c48a3a;
    `}
`;

const SplitTool = styled.div`
  display: flex;
  & > button:first-child { border-radius: 3px 0 0 3px; }
  & > button:last-child { border-radius: 0 3px 3px 0; margin-left: -1px; }
`;

const Crumbs = styled.nav`
  display: flex;
  align-items: center;
  flex: 1;
  min-width: 0;
  padding-left: 1px;
`;

const Crumb = styled.button`
  margin: 0 12px 2px 15px;
`;

const CrumbIcon = styled.button`
  margin: 0 6px 2px 0;
`;

const HistoryToggle = styled.button`
  margin: 0 4px 4px 0;
`;

const PaneBody = styled.div`
  display: flex;
  flex: 1;
  min-height: 0;
`;

/* ------------------------------------------------------------- scroll bars */

const VTrack = styled.div`
  display: flex;
  flex-direction: column;
  align-items: center;
  width: 16px;
  flex: none;
  background: #f0f0f0;
`;

const HTrack = styled.div`
  display: flex;
  align-items: center;
  height: 16px;
  flex: none;
  padding-right: 16px;
  background: #f0f0f0;
`;

const ScrollButton = styled.button`
  display: grid;
  place-items: center;
  width: 16px;
  height: 17px;
  flex: none;
`;

const Space = styled.div<{ $n: number }>`
  flex: ${(p) => p.$n} 1 0;
`;

const VThumb = styled.div<{ $n: number }>`
  flex: ${(p) => p.$n} 1 0;
  width: 15px;
  background: #cdcdcd;
`;

const HThumb = styled.div<{ $n: number }>`
  flex: ${(p) => p.$n} 1 0;
  height: 15px;
  background: #cdcdcd;
`;

const VScroll = ({ parts }: { parts: [number, number, number] }) => (
  <VTrack>
    <ScrollButton aria-label="Scroll up"><Chevron dir="up" /></ScrollButton>
    <Space $n={parts[0]} />
    <VThumb $n={parts[1]} />
    <Space $n={parts[2]} />
    <ScrollButton aria-label="Scroll down"><Chevron dir="down" /></ScrollButton>
  </VTrack>
);

const HScroll = ({ parts }: { parts: [number, number] }) => (
  <HTrack>
    <ScrollButton aria-label="Scroll left"><Chevron dir="left" /></ScrollButton>
    <HThumb $n={parts[0]} />
    <Space $n={parts[1]} />
    <ScrollButton aria-label="Scroll right"><Chevron dir="right" /></ScrollButton>
  </HTrack>
);

/* -------------------------------------------------------------------- tree */

const TreeBox = styled.div`
  display: flex;
  width: 225px;
  flex: none;
  min-height: 0;
`;

const TreeList = styled.ul`
  flex: 1;
  min-width: 0;
  overflow: hidden;
`;

const TreeRow = styled.li<{ $level: number }>`
  display: flex;
  align-items: center;
  height: 24px;
  padding-left: ${(p) => (p.$level === 0 ? 6 : 25)}px;
`;

const Twisty = styled.button`
  width: 10px;
  height: 10px;
  margin-right: 4px;
`;

const TreeItem = styled.button<{ $selected?: boolean }>`
  display: flex;
  align-items: center;
  gap: 5px;
  height: 24px;
  padding: 0 4px 0 2px;
  background: ${(p) => (p.$selected ? '#d9d9d9' : 'none')};
`;

const Grip = styled.div`
  display: grid;
  place-items: center;
  width: 6px;
  flex: none;
  &::before {
    content: '';
    width: 2px;
    height: 14px;
    background: repeating-linear-gradient(#777 0 2px, transparent 2px 4px);
  }
`;

/* -------------------------------------------------------------------- list */

const ListBox = styled.div`
  display: flex;
  flex-direction: column;
  flex: 1;
  min-width: 0;
`;

const ListRow = styled.div`
  display: flex;
  flex: 1;
  min-height: 0;
`;

const ListView = styled.div<{ $typeWidth: number }>`
  flex: 1;
  min-width: 0;
  overflow: hidden;
  background:
    linear-gradient(#e6edf8, #e6edf8) 159px 0 / 1px 100% no-repeat,
    linear-gradient(#e6edf8, #e6edf8) ${(p) => 159 + p.$typeWidth}px 0 / 1px 100% no-repeat,
    linear-gradient(#e6edf8, #e6edf8) ${(p) => 253 + p.$typeWidth}px 0 / 1px 100% no-repeat;
`;

const Table = styled.table`
  width: 100%;
  table-layout: fixed;
  border-collapse: collapse;
`;

const HeadCell = styled.th<{ $w?: number }>`
  position: relative;
  width: ${(p) => (p.$w ? `${p.$w}px` : 'auto')};
  height: 21px;
  padding: 3px 0 0 6px;
  font-weight: 400;
  text-align: left;
  white-space: nowrap;
  overflow: hidden;
`;

const SortMark = styled.svg`
  position: absolute;
  top: 0;
  left: calc(50% - 4px);
`;

const GroupCell = styled.th`
  height: 24px;
  padding: 2px 1px 0 12px;
  font-weight: 400;
  color: #1e3a9a;
`;

const GroupLine = styled.span`
  display: flex;
  align-items: center;
  gap: 5px;
  &::after { content: ''; flex: 1; height: 1px; background: #aab6dc; }
`;

const Cell = styled.td`
  height: 20px;
  padding: 0 0 0 6px;
  white-space: nowrap;
  overflow: hidden;
`;

const NameCell = styled(Cell)`
  padding-left: 8px;
`;

const NameLine = styled.span`
  display: flex;
  align-items: center;
  gap: 2px;
`;

const Meter = styled.div`
  width: 78px;
  height: 13px;
  margin: 0 0 1px 1px;
  background: #e6e6e6;
  border: 1px solid #bcbcbc;
  border-left: 0;
`;

const MeterFill = styled.div`
  height: 100%;
  background: #26a0da;
`;

const PaneStatus = styled.footer`
  height: 20px;
  flex: none;
  padding: 1px 0;
  font-size: 11px;
  background: #f0f0f0;
  border: 1px solid #a0a0a0;
`;

const StatusBar = styled.footer`
  display: flex;
  align-items: center;
  height: 20px;
  flex: none;
  padding-left: 6px;
  font-size: 11px;
  color: #444;
  white-space: pre;
  background: linear-gradient(#e4e8ec, #bfc4ca);
  border-top: 1px solid #8b95a3;
`;

const StatusDivider = styled.span`
  width: 3px;
  height: 16px;
  margin-left: 4px;
  border-left: 1px solid #f4f4f4;
  border-right: 1px solid #f4f4f4;
  background: #9aa0a8;
`;

const StatusEnd = styled.div`
  display: flex;
  align-items: center;
  gap: 8px;
  margin: 0 1px 0 auto;
`;

/* -------------------------------------------------------------------- data */

type TreeNode = { label: string; icon: string; level?: number; twisty?: 'open' | 'closed'; selected?: boolean } | null;

const docsNode: TreeNode = { label: 'Documenten', icon: 'doc' };

const favourites: TreeNode[] = [
  { label: 'Downloads', icon: 'download' },
  { label: 'Dropbox', icon: 'dropboxLight' },
  { label: 'FolderViewer', icon: 'folder' },
  { label: 'Google Drive', icon: 'gdrive' },
  { label: 'Images FolderViewer 5', icon: 'folder' },
  { label: 'Test Videos', icon: 'folder' },
  null,
  { label: 'Bureaublad', icon: 'desktop', level: 0, twisty: 'open' },
  { label: 'Dropbox', icon: 'dropbox', twisty: 'closed' },
  { label: 'OneDrive', icon: 'onedrive', twisty: 'closed' },
  { label: 'Daan Deenik', icon: 'user', twisty: 'closed' },
  { label: 'Deze pc', icon: 'pc', twisty: 'closed', selected: true },
  { label: 'Bibliotheken', icon: 'libs', twisty: 'closed' },
  { label: 'Netwerk', icon: 'network', twisty: 'closed' },
  { label: 'Thuisgroep', icon: 'homegroup', twisty: 'closed' },
  { label: 'Configuratiescherm', icon: 'control', twisty: 'closed' },
  { label: 'Prullenbak', icon: 'bin' },
  { label: 'Mediaserver', icon: 'media', twisty: 'closed' },
  { label: 'Developer', icon: 'folder', twisty: 'closed' },
];

type Entry = { name: string; icon: string; type: string; wideType?: string; used?: number };

const sections: { title: string; entries: Entry[] }[] = [
  {
    title: 'Mappen (6)',
    entries: [
      { name: 'Afbeeldingen', icon: 'pictures', type: 'Systeemmap' },
      { name: 'Desktop', icon: 'desktop', type: 'Systeemmap' },
      { name: 'Documenten', icon: 'doc', type: 'Systeemmap' },
      { name: 'Downloads', icon: 'download', type: 'Systeemmap' },
      { name: 'Muziek', icon: 'music', type: 'Systeemmap' },
      { name: "Video's", icon: 'video', type: 'Systeemmap' },
    ],
  },
  {
    title: 'Apparaten en stations (7)',
    entries: [
      { name: 'Diskettestation (A:)', icon: 'darkFloppy', type: 'Diskettestation' },
      { name: 'Lokale schijf (C:)', icon: 'winDrive', type: 'Lokale schijf', used: 61 },
      { name: 'Lokale schijf (D:)', icon: 'darkDrive', type: 'Lokale schijf', used: 31 },
      { name: 'Data2(F:) (E:)', icon: 'shareDrive', type: 'Lokale schijf', used: 23 },
      { name: 'Data (F:)', icon: 'shareDrive', type: 'Lokale schijf', used: 39 },
      { name: 'Windows7 (G:)', icon: 'darkDrive', type: 'Lokale schijf', used: 12 },
      { name: 'BD-romstation (H:)', icon: 'cdShare', type: 'Cd-station' },
    ],
  },
  {
    title: 'Netwerklocaties (5)',
    entries: [
      { name: 'DiskStation', icon: 'media', type: 'Mediaserver' },
      { name: 'video (\\\\DISKSTATION)...', icon: 'netDriveX', type: 'Niet-verbonden n...', wideType: 'Niet-verbonden netwerkstation', used: 76 },
      { name: 'Projecten (\\\\DISKSTATI...', icon: 'netDrive', type: 'Netwerkstation', used: 76 },
      { name: 'homes (\\\\DISKSTATIO...', icon: 'netDrive', type: 'Netwerkstation', used: 76 },
      { name: 'home (\\\\DISKSTATION...', icon: 'netDrive', type: 'Netwerkstation', used: 76 },
    ],
  },
];

const drives = [
  ['A', 'driveFloppy'], ['C', 'drive'], ['D', 'drive'], ['E', 'drive'], ['F', 'drive'], ['G', 'drive'],
  ['H', 'driveCd'], ['X', 'driveNet'], ['Y', 'driveNet'], ['Z', 'driveNet'],
];

const quickItems: [string, string, boolean?][] = [
  ['cabinet', 'Explorer'], ['paneRight', 'Copy right'], ['paneLeft', 'Copy left'], ['paneStar', 'New panel'],
  ['paneGray', 'Single panel', true], ['paneH', 'Horizontal'], ['paneV', 'Vertical', true], ['drive', 'Drives'],
  ['cmd', 'Command prompt'], ['powershell', 'PowerShell'], ['run', 'Run'], ['usb', 'Eject'],
  ['netpc', 'Remote desktop'], ['cabinet', 'Archive'],
];

const ribbonTabs: [string, number][] = [
  ['Explorer', 66], ['Internet', 67], ['Document Library', 121], ['Picture Library', 104], ['Music Library', 98],
  ['Video Library', 96], ['File Editors', 84], ['Network Tools', 103], ['System Tools', 95],
];

/* -------------------------------------------------------------- components */

const Big = ({ icon, w, lines, menu }: { icon: string; w: number; lines: string[]; menu?: boolean }) => (
  <BigButton $w={w}>
    <BigIcon name={icon} />
    {lines.map((line, i) => (
      <LabelLine key={i}>
        {line}
        {menu && i === lines.length - 1 && <Down size={6} />}
      </LabelLine>
    ))}
  </BigButton>
);

const Small = ({ icon, label, on, menu, w }: { icon: string; label: string; on?: boolean; menu?: boolean; w?: number }) => (
  <SmallButton $on={on} $w={w}>
    <Icon name={icon} />
    <span>{label}</span>
    {menu && <Down size={6} />}
  </SmallButton>
);

const FilePane = ({ tree, treeScroll, listScroll, typeWidth, lastColumn, closable }: {
  tree: TreeNode[];
  treeScroll: [number, number, number];
  listScroll: [number, number];
  typeWidth: number;
  lastColumn: string;
  closable?: boolean;
}) => (
  <Pane>
    <PaneTabs>
      <PaneTab>
        <Icon name="cabinet" />
        <button aria-label="Close tab"><Cross /></button>
      </PaneTab>
      <PaneTools>
        <button aria-label="Tab list"><Down /></button>
        {closable && <button aria-label="Close panel"><Cross /></button>}
      </PaneTools>
    </PaneTabs>
    <PaneFrame>
      <DriveBar>
        {drives.map(([letter, icon]) => (
          <DriveButton key={letter} $current={letter === 'A'}>
            <Icon name={icon} />
            {letter}
          </DriveButton>
        ))}
      </DriveBar>
      <NavBar>
        <ToolButton $w={21} aria-label="Tree"><Icon name="treeView" /></ToolButton>
        <ToolButton $w={21} aria-label="Back"><Icon name="back" /></ToolButton>
        <ToolButton $w={21} aria-label="Forward"><Icon name="forward" /></ToolButton>
        <Crumbs aria-label="Location">
          <CrumbIcon aria-label="Computer"><Icon name="pc" /></CrumbIcon>
          <Chevron dir="right" color="#777" size={8} />
          <Crumb>Deze pc</Crumb>
          <Chevron dir="right" color="#777" size={8} />
        </Crumbs>
        <HistoryToggle aria-label="History"><Down color="#222" /></HistoryToggle>
        <ToolButton aria-label="Select rows"><Icon name="tableSel" /></ToolButton>
        <ToolButton aria-label="Grid"><Icon name="table" /></ToolButton>
        <ToolButton aria-label="Find"><Icon name="magnify" /></ToolButton>
        <ToolButton $w={22} $on aria-label="Folders"><Icon name="folderOpen" /></ToolButton>
        <ToolButton aria-label="Details"><Icon name="details" /></ToolButton>
        <SplitTool>
          <ToolButton $w={24} aria-label="Libraries"><Icon name="libView" /></ToolButton>
          <ToolButton $w={16} aria-label="Library options"><Down size={6} /></ToolButton>
        </SplitTool>
        <SplitTool>
          <ToolButton $w={24} aria-label="View"><Icon name="listView" /></ToolButton>
          <ToolButton $w={16} aria-label="View options"><Down size={6} /></ToolButton>
        </SplitTool>
      </NavBar>
      <PaneBody>
        <TreeBox>
          <TreeList>
            {tree.map((node, i) =>
              node ? (
                <TreeRow key={i} $level={node.level ?? 1}>
                  {node.twisty ? (
                    <Twisty aria-label={`Toggle ${node.label}`}>
                      <Chevron dir={node.twisty === 'open' ? 'down' : 'right'} color={node.twisty === 'open' ? '#404040' : '#a6a6a6'} />
                    </Twisty>
                  ) : (
                    <Twisty as="span" />
                  )}
                  <TreeItem $selected={node.selected}>
                    <Icon name={node.icon} />
                    {node.label}
                  </TreeItem>
                </TreeRow>
              ) : (
                <TreeRow key={i} $level={1} aria-hidden="true" />
              ),
            )}
          </TreeList>
          <VScroll parts={treeScroll} />
        </TreeBox>
        <Grip />
        <ListBox>
          <ListRow>
            <ListView $typeWidth={typeWidth}>
              <Table>
                <thead>
                  <tr>
                    <HeadCell $w={160}>
                      Naam
                      <SortMark width="9" height="5" viewBox="0 0 9 5" aria-hidden="true">
                        <path d="M.5 4.500l4-4 4 4" stroke="#666" fill="none" />
                      </SortMark>
                    </HeadCell>
                    <HeadCell $w={typeWidth}>Type</HeadCell>
                    <HeadCell $w={94}>Percentage vol</HeadCell>
                    <HeadCell>{lastColumn}</HeadCell>
                  </tr>
                </thead>
                {sections.map((section) => (
                  <tbody key={section.title}>
                    <tr>
                      <GroupCell colSpan={4} scope="rowgroup">
                        <GroupLine>{section.title}</GroupLine>
                      </GroupCell>
                    </tr>
                    {section.entries.map((entry) => (
                      <tr key={entry.name}>
                        <NameCell>
                          <NameLine>
                            <Icon name={entry.icon} />
                            {entry.name}
                          </NameLine>
                        </NameCell>
                        <Cell>{typeWidth > 150 ? entry.wideType ?? entry.type : entry.type}</Cell>
                        <Cell>
                          {entry.used !== undefined && (
                            <Meter role="progressbar" aria-valuenow={entry.used} aria-label={entry.name}>
                              <MeterFill style={{ width: `${entry.used}%` }} />
                            </Meter>
                          )}
                        </Cell>
                        <Cell />
                      </tr>
                    ))}
                  </tbody>
                ))}
              </Table>
            </ListView>
            <VScroll parts={[0, 408, 18]} />
          </ListRow>
          <HScroll parts={listScroll} />
        </ListBox>
      </PaneBody>
      <PaneStatus>0 selected 0 KB in size</PaneStatus>
    </PaneFrame>
  </Pane>
);

export default function App() {
  return (
    <Window>
      <GlobalStyle />
      <SharedPaints />
      <TitleBar>
        <QuickBar>
          {quickItems.map(([icon, label, on], i) => (
            <QuickButton key={i} $on={on} aria-label={label}>
              <Icon name={icon} />
            </QuickButton>
          ))}
          <QuickMore aria-label="Customize"><Down size={6} /></QuickMore>
        </QuickBar>
        <WindowTitle>FolderViewer</WindowTitle>
        <WindowButtons>
          <WindowButton aria-label="Minimize">
            <Svg width="10" height="10" viewBox="0 0 10 10"><path d="M0 5.500h10" stroke="#000" /></Svg>
          </WindowButton>
          <WindowButton aria-label="Maximize">
            <Svg width="10" height="10" viewBox="0 0 10 10"><path d="M.5.5h9v9h-9z" stroke="#000" fill="none" /></Svg>
          </WindowButton>
          <WindowButton aria-label="Close">
            <Svg width="10" height="10" viewBox="0 0 10 10"><path d="M0 0l10 10M10 0L0 10" stroke="#000" /></Svg>
          </WindowButton>
        </WindowButtons>
      </TitleBar>
      <TabStrip aria-label="Ribbon tabs">
        <ConfigTab>Config</ConfigTab>
        {ribbonTabs.map(([label, w]) => (
          <RibbonTab key={label} $w={w} $active={label === 'Explorer'}>{label}</RibbonTab>
        ))}
        <TabHelp aria-label="Help"><Icon name="helpLight" /></TabHelp>
      </TabStrip>
      <Ribbon>
        <Group $w={234}>
          <GroupBody $pad={9}>
            <Big icon="cabinet" w={54} lines={['Explorer']} />
            <Big icon="search" w={54} lines={['Search', 'files']} menu />
            <Big icon="print" w={40} lines={['Print', 'files']} />
            <Stack $wide>
              <Small icon="ie" label="Viewer" />
              <Small icon="preview" label="Preview" />
            </Stack>
          </GroupBody>
          <GroupTitle>Explorer</GroupTitle>
        </Group>
        <Group $w={298}>
          <GroupBody $pad={10}>
            <Big icon="star" w={56} lines={['Add to', 'Favorites']} />
            <Big icon="copy" w={54} lines={['Copy', 'Files']} menu />
            <Big icon="move" w={42} lines={['Move', 'Files']} />
            <Big icon="paste" w={48} lines={['Paste']} />
            <Separator />
            <Stack>
              <Small icon="addFolder" label="Add" />
              <Small icon="manager" label="Manager" />
              <Small icon="help" label="Help" />
            </Stack>
          </GroupBody>
          <GroupTitle>Explorer File Management</GroupTitle>
        </Group>
        <Group $w={198}>
          <GroupBody $pad={7}>
            <Stack>
              <Small icon="delete" label="Delete File" w={87} />
              <Small icon="folderOpen" label="New Folder" w={87} />
              <Small icon="properties" label="Properties" w={87} />
            </Stack>
            <Stack>
              <Small icon="attributes" label="Attributes" />
              <Small icon="rename" label="Rename" />
              <Small icon="geo" label="Add GEO Tag" />
            </Stack>
          </GroupBody>
          <GroupTitle>Explorer Tools</GroupTitle>
        </Group>
        <Group $w={127}>
          <GroupBody $pad={8}>
            <Big icon="connect" w={60} lines={['Connect', '']} menu />
            <Big icon="share" w={50} lines={['Share', 'Folder']} />
          </GroupBody>
          <GroupTitle>Explorer Connections</GroupTitle>
        </Group>
        <Group $w={97}>
          <GroupBody $pad={7}>
            <Stack>
              <Small icon="paneV" label="Vertical" on />
              <Small icon="paneH" label="Horizontal" />
              <Small icon="panels" label="Panels" menu />
            </Stack>
          </GroupBody>
          <GroupTitle>Explorer Views</GroupTitle>
        </Group>
        <Collapse aria-label="Collapse ribbon"><Chevron dir="up" weight={1} /></Collapse>
      </Ribbon>
      <Workspace>
        <FilePane
          tree={[docsNode, ...favourites]}
          treeScroll={[88, 337, 18]}
          listScroll={[253, 122]}
          typeWidth={117}
          lastColumn="Besch"
        />
        <PaneSplitter />
        <FilePane
          tree={favourites}
          treeScroll={[106, 337, 0]}
          listScroll={[373, 118]}
          typeWidth={200}
          lastColumn="Totale groot"
          closable
        />
      </Workspace>
      <StatusBar>
        {'Daan on DAANW8 / Windows 2012 Server  -  IP: 192.168.2.11'}
        <StatusDivider />
        <StatusEnd>
          <StatusDivider />
          <Svg width="12" height="12" viewBox="0 0 12 12" aria-hidden="true">
            <path d="M9 1h2v2H9zM5 5h2v2H5zM9 5h2v2H9zM1 9h2v2H1zM5 9h2v2H5zM9 9h2v2H9z" fill="#8b929a" />
          </Svg>
        </StatusEnd>
      </StatusBar>
    </Window>
  );
}
